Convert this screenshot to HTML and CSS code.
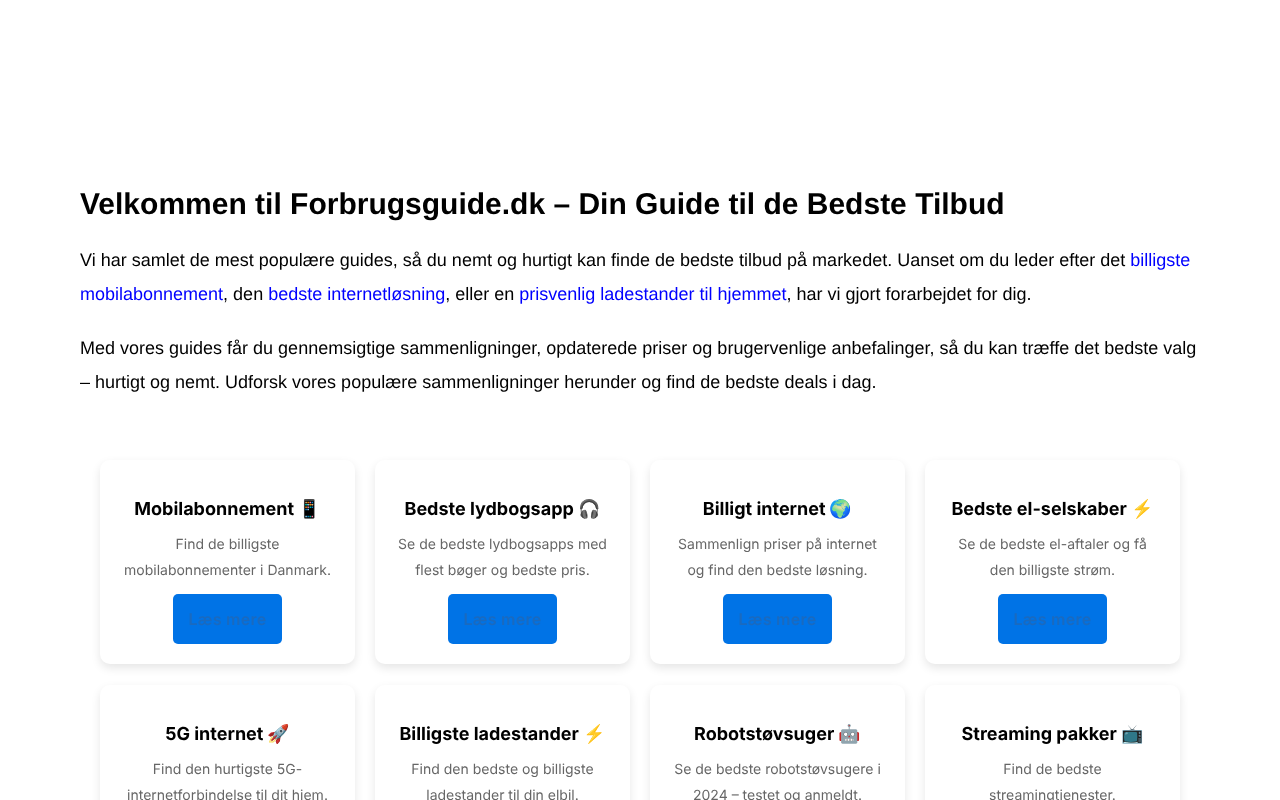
FILE: index.html
```html
<!DOCTYPE html>
<html lang="da">
<head>
<meta charset="utf-8">
<title>Forbrugsguide.dk</title>
<link rel="stylesheet" href="styles.css">
</head>
<body>
<main class="page">
  <section class="intro">
    <h1 class="intro-title">Velkommen til Forbrugsguide.dk – Din Guide til de Bedste Tilbud</h1>
    <p class="intro-text">Vi har samlet de mest populære guides, så du nemt og hurtigt kan finde de bedste tilbud på markedet. Uanset om du leder efter det <a href="#">billigste mobilabonnement</a>, den <a href="#">bedste internetløsning</a>, eller en <a href="#">prisvenlig ladestander til hjemmet</a>, har vi gjort forarbejdet for dig.</p>
    <p class="intro-text">Med vores guides får du gennemsigtige sammenligninger, opdaterede priser og brugervenlige anbefalinger, så du kan træffe det bedste valg – hurtigt og nemt. Udforsk vores populære sammenligninger herunder og find de bedste deals i dag.</p>
  </section>
  <section class="grid">
    <article class="card"><h3 class="card-title">Mobilabonnement 📱</h3><p class="card-text">Find de billigste mobilabonnementer i Danmark.</p><a class="btn" href="#">Læs mere</a></article>
    <article class="card"><h3 class="card-title">Bedste lydbogsapp 🎧</h3><p class="card-text">Se de bedste lydbogsapps med flest bøger og bedste pris.</p><a class="btn" href="#">Læs mere</a></article>
    <article class="card"><h3 class="card-title">Billigt internet 🌍</h3><p class="card-text">Sammenlign priser på internet og find den bedste løsning.</p><a class="btn" href="#">Læs mere</a></article>
    <article class="card"><h3 class="card-title">Bedste el-selskaber ⚡</h3><p class="card-text">Se de bedste el-aftaler og få den billigste strøm.</p><a class="btn" href="#">Læs mere</a></article>
    <article class="card"><h3 class="card-title">5G internet 🚀</h3><p class="card-text">Find den hurtigste 5G-internetforbindelse til dit hjem.</p><a class="btn" href="#">Læs mere</a></article>
    <article class="card"><h3 class="card-title">Billigste ladestander ⚡</h3><p class="card-text">Find den bedste og billigste ladestander til din elbil.</p><a class="btn" href="#">Læs mere</a></article>
    <article class="card"><h3 class="card-title">Robotstøvsuger 🤖</h3><p class="card-text">Se de bedste robotstøvsugere i 2024 – testet og anmeldt.</p><a class="btn" href="#">Læs mere</a></article>
    <article class="card"><h3 class="card-title">Streaming pakker 📺</h3><p class="card-text">Find de bedste streamingtjenester.</p><a class="btn" href="#">Læs mere</a></article>
  </section>
</main>
</body>
</html>
```
FILE: styles.css
```css
* { box-sizing: border-box; }
html, body { margin: 0; background: #fff; }
body { font-family: "Liberation Sans", Arial, sans-serif; color: #000; text-rendering: geometricPrecision; }
.page { padding: 185px 80px 40px; will-change: transform; }
.intro-title { margin: 0 0 18px; font-size: 30px; line-height: 40px; font-weight: 700; }
.intro-text { margin: 0 0 20px; font-size: 18px; line-height: 34px; }
.intro-text a { color: #0000ff; text-decoration: none; }
.grid { display: grid; grid-template-columns: repeat(4, 255px); gap: 21px 20px; padding: 20px; justify-content: center; margin-top: 41px; }
.card { background: #fff; border-radius: 10px; box-shadow: 0 4px 10px rgba(0, 0, 0, 0.1); padding: 20px; text-align: center; font-family: Inter, sans-serif; display: flex; flex-direction: column; align-items: center; }
.card-title { margin: 17px -20px 9px; font-size: 18px; line-height: 26px; font-weight: 650; }
.card-text { margin: 0 0 10px; font-size: 14px; line-height: 26px; color: #666; }
.btn { display: block; padding: 15px; border-radius: 5px; background: #0073e6; color: #1a6abf; font-size: 16px; line-height: 20px; font-weight: 600; letter-spacing: 0.3px; text-decoration: none; }
```
